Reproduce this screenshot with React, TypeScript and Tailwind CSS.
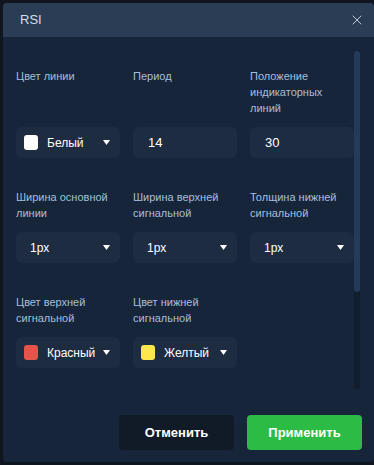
import { X } from "lucide-react";

type Field = {
  label: string;
  kind: "select" | "input";
  value: string;
  swatch?: string;
};

const rows: Field[][] = [
  [
    { label: "Цвет линии", kind: "select", value: "Белый", swatch: "#ffffff" },
    { label: "Период", kind: "input", value: "14" },
    { label: "Положение индикаторных линий", kind: "input", value: "30" },
  ],
  [
    { label: "Ширина основной линии", kind: "select", value: "1px" },
    { label: "Ширина верхней сигнальной", kind: "select", value: "1px" },
    { label: "Толщина нижней сигнальной", kind: "select", value: "1px" },
  ],
  [
    { label: "Цвет верхней сигнальной", kind: "select", value: "Красный", swatch: "#e5534b" },
    { label: "Цвет нижней сигнальной", kind: "select", value: "Желтый", swatch: "#fde74c" },
  ],
];

const Caret = () => (
  <svg width="7" height="5" viewBox="0 0 7 5" className="shrink-0">
    <path d="M0 0h7L3.5 5z" fill="#ffffff" />
  </svg>
);

const Control = ({ field }: { field: Field }) => {
  if (field.kind === "input") {
    return (
      <div className="h-[31px] rounded-md bg-[#1d2c41] flex items-center pl-[15px] text-[13px] text-white">
        {field.value}
      </div>
    );
  }
  return (
    <div
      className={
        "h-[31px] rounded-md bg-[#1d2c41] flex items-center pr-[10px] text-[12px] font-medium text-white " +
        (field.swatch ? "pl-2" : "pl-[14px]")
      }
    >
      {field.swatch && (
        <span
          className="w-[14px] h-[15px] rounded-[3px] mr-[9px] shrink-0"
          style={{ background: field.swatch }}
        />
      )}
      <span className="flex-1">{field.value}</span>
      <Caret />
    </div>
  );
};

export default function App() {
  return (
    <div
      className="w-[374px] h-[465px] bg-[#0f1620] pt-[3px] pl-[3px]"
      style={{ fontFamily: '"Liberation Sans", Arial, sans-serif' }}
    >
      <div className="w-[371px] h-[459px] rounded-[4px] overflow-hidden bg-[#17253a] flex flex-col">
        <div className="h-[34px] shrink-0 bg-[#2b3d55] flex items-center justify-between pl-[17px] pr-[9px]">
          <span className="text-[13px] text-[#d3deeb]">RSI</span>
          <X size={16} strokeWidth={1.4} color="#c9d4e2" />
        </div>

        <div className="relative flex-1 flex flex-col">
          <div className="pl-[13px] pt-[31px] flex flex-col gap-[31px]">
            {rows.map((row, i) => (
              <div key={i} className="grid grid-cols-[104px_104px_104px] gap-x-[13px]">
                {row.map((f) => (
                  <div key={f.label} className="flex flex-col justify-between gap-[11px]">
                    <div className="text-[11px] leading-4 text-[#a7bfd8]">{f.label}</div>
                    <Control field={f} />
                  </div>
                ))}
              </div>
            ))}
          </div>

          <div className="absolute left-[351px] top-[14px] w-[6px] h-[338px] rounded-full bg-[#121e2e]">
            <div className="w-[6px] h-[241px] rounded-full bg-[#233a5a]" />
          </div>

          <div className="mt-auto flex justify-end gap-[13px] pr-[12px] pb-[12px]">
            <button className="w-[115px] h-[35px] rounded-[4px] bg-[#111a27] text-white text-[13px] font-bold">
              Отменить
            </button>
            <button className="w-[115px] h-[35px] rounded-[4px] bg-[#2cbb45] text-white text-[13px] font-bold">
              Применить
            </button>
          </div>
        </div>
      </div>
    </div>
  );
}
